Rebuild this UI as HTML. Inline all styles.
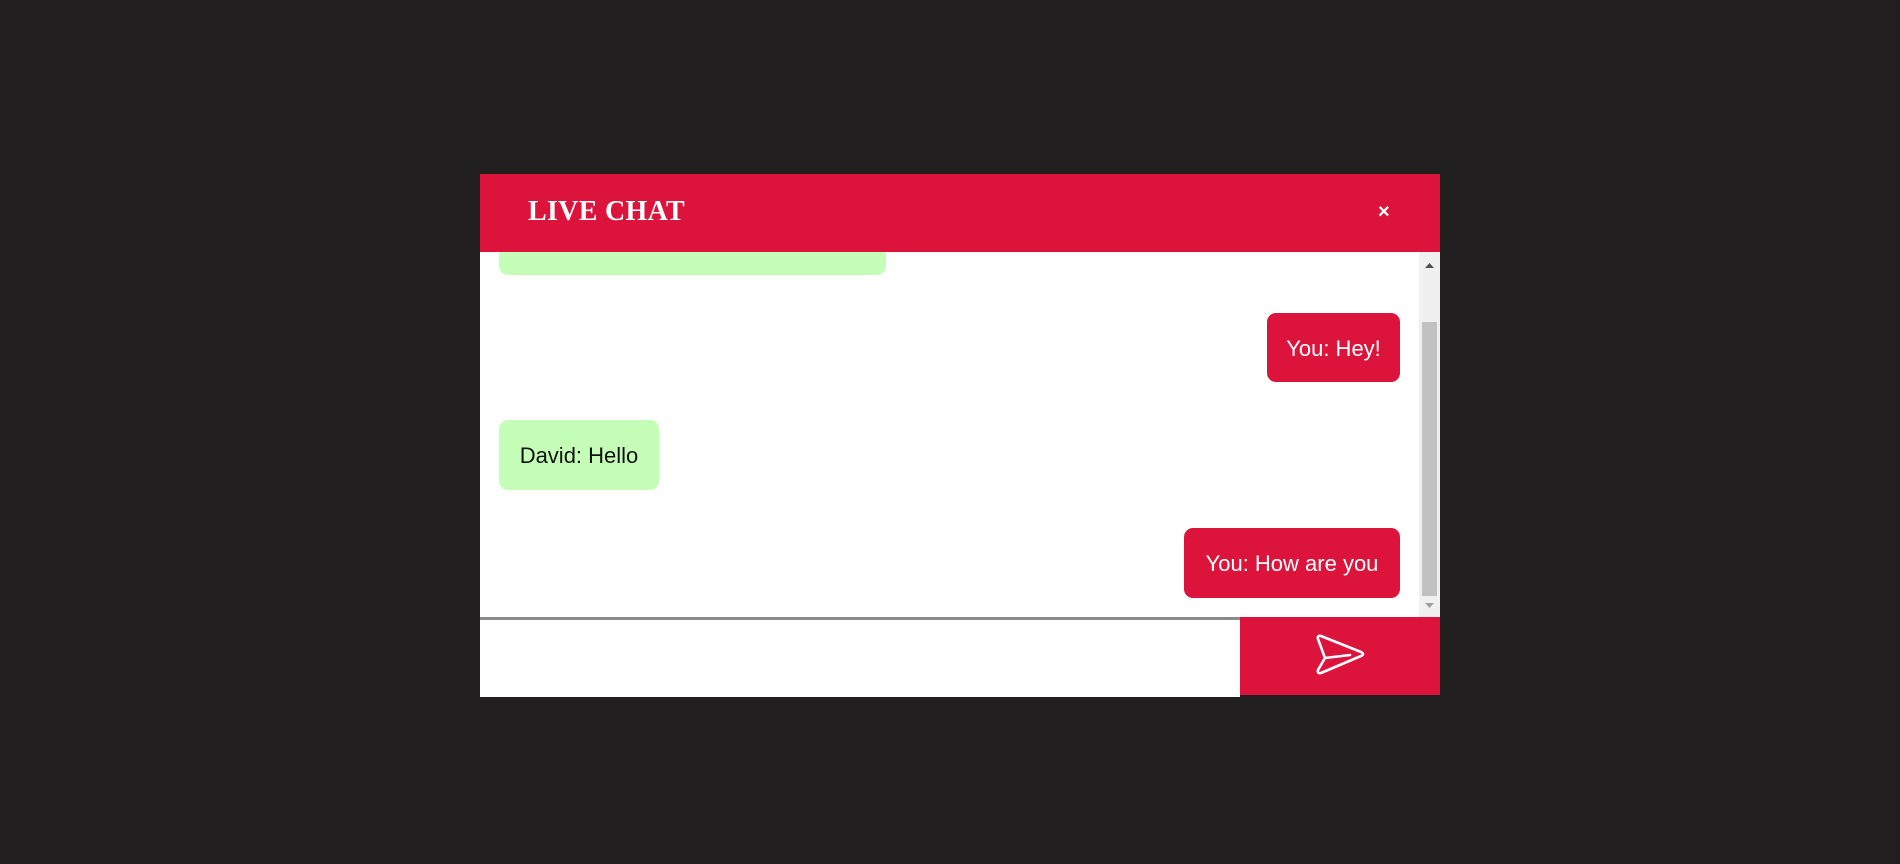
<!DOCTYPE html>
<html><head><meta charset="utf-8"><style>
*{margin:0;padding:0;box-sizing:border-box}
body{width:1900px;height:864px;background:#201e1f;position:relative;overflow:hidden;font-family:"Liberation Sans",sans-serif}
.hdr{position:absolute;left:480px;top:174px;width:960px;height:78px;background:#dc143c;z-index:2}
.title{position:absolute;left:48px;top:22px;color:#fff;font:bold 28px "Liberation Serif",serif;letter-spacing:0.3px}
.x{position:absolute;left:898px;top:27px;color:#fff;font:bold 20px "Liberation Sans",sans-serif}
.body{position:absolute;left:480px;top:252px;width:939px;height:365px;background:#fff;overflow:hidden}
.sb{position:absolute;left:1419px;top:252px;width:21px;height:365px;background:#f0f0f0}
.thumb{position:absolute;left:3px;top:70px;width:15px;height:274px;background:#c1c1c1}
.b{position:absolute;border-radius:9px;font-size:22px;display:flex;align-items:center;justify-content:center;padding-top:2px}
.g{background:#c5ffb7;color:#111}
.r{background:#dc143c;color:#fff}
.inp{position:absolute;left:480px;top:617px;width:760px;height:80px;background:#fff;border-top:3px solid #8a8a8a}
.btn{position:absolute;left:1240px;top:617px;width:200px;height:78px;background:#dc143c}
</style></head><body>
<div class="hdr"><div class="title">LIVE CHAT</div><div class="x">×</div></div>
<div class="body">
<div class="b g" style="left:19px;top:-30px;width:387px;height:53px"><span style="position:absolute;left:327px;top:-6px">y</span></div>
<div class="b r" style="left:787px;top:61px;width:133px;height:69px">You: Hey!</div>
<div class="b g" style="left:19px;top:168px;width:160px;height:70px">David: Hello</div>
<div class="b r" style="left:704px;top:276px;width:216px;height:70px">You: How are you</div>
</div>
<div class="sb">
<svg style="position:absolute;left:5px;top:10px" width="11" height="7"><path d="M1 6 L5.5 1 L10 6Z" fill="#505050"/></svg>
<div class="thumb"></div>
<svg style="position:absolute;left:5px;top:350px" width="11" height="7"><path d="M1 1 L5.5 6 L10 1Z" fill="#a0a0a0"/></svg>
</div>
<div class="inp"></div>
<div class="btn">
<svg style="position:absolute;left:71px;top:16px" width="56" height="48" viewBox="0 0 56 48">
<path d="M7 6 Q6 2 10 3 L50 19 Q54 21 50 23 L10 40 Q6 41 7 37 L14 25 L7 6Z M14 25 L39 22" fill="none" stroke="#fff" stroke-width="2.6" stroke-linejoin="round" stroke-linecap="round"/>
</svg>
</div>
</body></html>
